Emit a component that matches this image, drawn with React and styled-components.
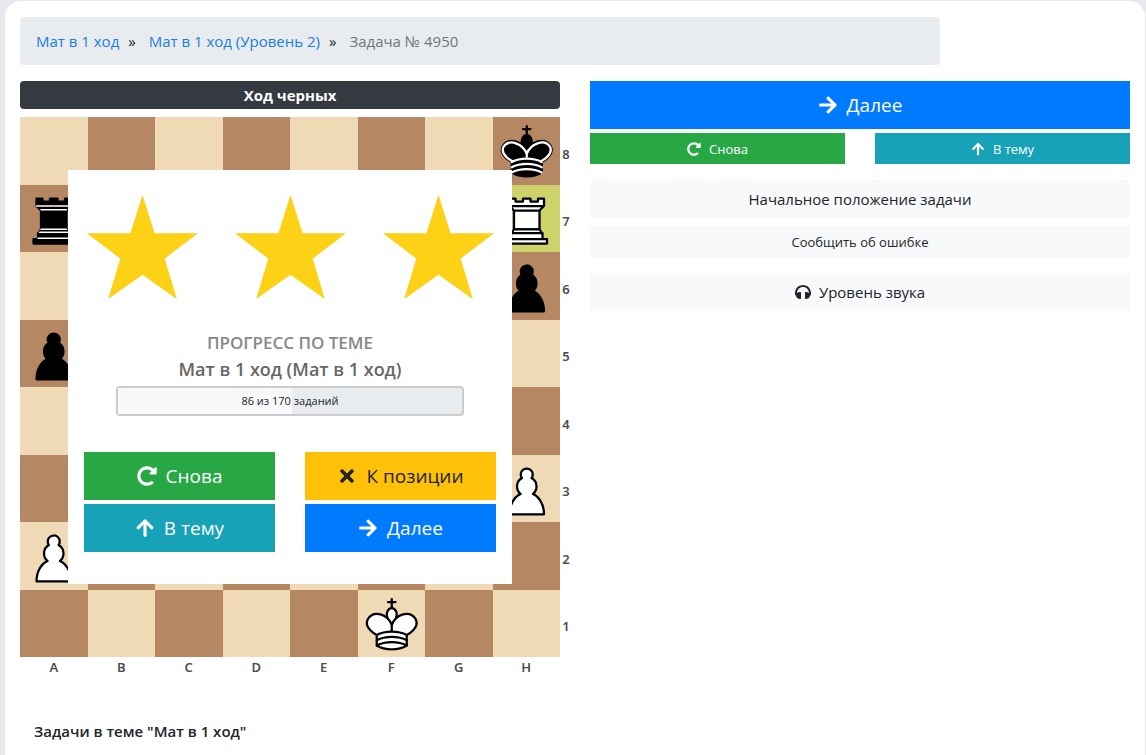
import React from "react";
import styled, { createGlobalStyle } from "styled-components";
import {
  FaArrowRight,
  FaArrowUp,
  FaHeadphones,
  FaRedoAlt,
  FaTimes,
} from "react-icons/fa";

const files = ["A", "B", "C", "D", "E", "F", "G", "H"];
const ranks = [8, 7, 6, 5, 4, 3, 2, 1];

const position = {
  H8: "blackKing",
  A7: "blackRook",
  H7: "whiteRook",
  H6: "blackPawn",
  A5: "blackPawn",
  H3: "whitePawn",
  A2: "whitePawn",
  F1: "whiteKing",
};

const lastMove = "H7";

const progress = { done: 86, total: 170 };

const King = ({ fill, line }) => (
  <g fill={fill}>
    <path strokeLinejoin="miter" d="M22.5 11.63V6M20 8h5" />
    <path d="M22.5 25s4.5-7.5 3-10.5c0 0-1-2.5-3-2.5s-3 2.5-3 2.5c-1.5 3 3 10.5 3 10.5" />
    <path d="M12.5 37c5.5 3.5 14.5 3.5 20 0v-7s9-4.5 6-10.5c-4-6.5-13.5-3.5-16 4V27v-3.5c-2.5-7.5-12-10.5-16-4-3 6 6 10.5 6 10.5v7" />
    {line === "#fff" && (
      <path
        stroke={line}
        d="M32 29.5s8.5-4 6.03-9.65C34.15 14 25 18 22.5 24.5v2.1-2.1C20 18 10.85 14 6.97 19.85 4.5 25.5 13 29.5 13 29.5"
      />
    )}
    <path
      fill="none"
      stroke={line}
      d="M12.5 30c5.5-3 14.5-3 20 0m-20 3.5c5.5-3 14.5-3 20 0m-20 3.5c5.5-3 14.5-3 20 0"
    />
  </g>
);

const Pawn = ({ fill }) => (
  <path
    fill={fill}
    d="M22.5 9c-2.21 0-4 1.79-4 4 0 .89.29 1.71.78 2.38C17.33 16.5 16 18.59 16 21c0 2.03.94 3.84 2.41 5.03-3 1.06-7.41 5.55-7.41 13.47h23c0-7.92-4.41-12.41-7.41-13.47 1.47-1.19 2.41-3 2.41-5.03 0-2.41-1.33-4.5-3.28-5.62.49-.67.78-1.49.78-2.38 0-2.21-1.79-4-4-4z"
  />
);

const Rook = ({ fill, line }) => (
  <g fill={fill}>
    <path d="M14 29.5v-13h17v13H14z" />
    <path d="M9 39h27v-3H9v3zM12.5 32l1.5-2.5h17l1.5 2.5h-20zM12 36v-4h21v4H12z" />
    <path d="M14 17L11 14h23l-3 3H14zM11 14V9h4v2h5V9h5v2h5V9h4v5H11z" />
    {line === "#fff" && (
      <path
        stroke={line}
        strokeWidth="1"
        d="M12 35.5h21M13 31.5h19M14 29.5h17M14 16.5h17M11 14h23"
      />
    )}
  </g>
);

const pieces = {
  blackKing: <King fill="#000" line="#fff" />,
  whiteKing: <King fill="#fff" line="#000" />,
  blackRook: <Rook fill="#000" line="#fff" />,
  whiteRook: <Rook fill="#fff" line="#000" />,
  blackPawn: <Pawn fill="#000" />,
  whitePawn: <Pawn fill="#fff" />,
};

const Board = () => (
  <BoardFrame>
    <Squares>
      {ranks.map((rank, y) =>
        files.map((file, x) => {
          const name = file + rank;
          return (
            <Square
              key={name}
              $dark={(x + y) % 2 === 1}
              $marked={name === lastMove}
            >
              {position[name] && (
                <Piece viewBox="0 0 45 45">{pieces[position[name]]}</Piece>
              )}
            </Square>
          );
        })
      )}
    </Squares>
    <Ranks>
      {ranks.map((rank) => (
        <Coord key={rank}>{rank}</Coord>
      ))}
    </Ranks>
    <Files>
      {files.map((file) => (
        <Coord key={file}>{file}</Coord>
      ))}
    </Files>
  </BoardFrame>
);

const ResultDialog = () => (
  <Dialog role="dialog" aria-label="Прогресс по теме">
    <Stars>
      {[1, 2, 3].map((star) => (
        <Star key={star} viewBox="0 0 110 103">
          <polygon points="55,0 67,38 110,38 77,63 89,103 55,79 21,103 33,63 0,38 43,38" />
        </Star>
      ))}
    </Stars>
    <ProgressTitle>ПРОГРЕСС ПО ТЕМЕ</ProgressTitle>
    <ThemeTitle>Мат в 1 ход (Мат в 1 ход)</ThemeTitle>
    <Progress>
      <ProgressBar
        style={{ width: `${(progress.done / progress.total) * 100}%` }}
      />
      <ProgressText>
        {progress.done} из {progress.total} заданий
      </ProgressText>
    </Progress>
    <DialogButtons>
      <Button $size="large" $color="green">
        <FaRedoAlt />
        Снова
      </Button>
      <Button $size="large" $color="yellow">
        <FaTimes />К позиции
      </Button>
      <Button $size="large" $color="teal">
        <FaArrowUp />В тему
      </Button>
      <Button $size="large" $color="blue">
        <FaArrowRight />
        Далее
      </Button>
    </DialogButtons>
  </Dialog>
);

const App = () => {
  return (
    <>
      <GlobalStyle />
      <Page>
        <Breadcrumb>
          <a href="#mate">Мат в 1 ход</a>
          <Separator>»</Separator>
          <a href="#level">Мат в 1 ход (Уровень 2)</a>
          <Separator>»</Separator>
          <Current>Задача № 4950</Current>
        </Breadcrumb>
        <Column>
          <Turn>Ход черных</Turn>
          <BoardArea>
            <Board />
            <ResultDialog />
          </BoardArea>
        </Column>
        <Column>
          <Button $size="large" $color="blue">
            <FaArrowRight />
            Далее
          </Button>
          <ButtonPair>
            <Button $size="small" $color="green">
              <FaRedoAlt />
              Снова
            </Button>
            <Button $size="small" $color="teal">
              <FaArrowUp />В тему
            </Button>
          </ButtonPair>
          <LightButtons>
            <Button $color="light">Начальное положение задачи</Button>
            <Button $size="small" $color="light">
              Сообщить об ошибке
            </Button>
          </LightButtons>
          <Button $color="light">
            <FaHeadphones />
            Уровень звука
          </Button>
        </Column>
        <TasksTitle>Задачи в теме "Мат в 1 ход"</TasksTitle>
      </Page>
    </>
  );
};

const colors = {
  blue: ["#007bff", "#fff"],
  green: ["#28a745", "#fff"],
  teal: ["#17a2b8", "#fff"],
  yellow: ["#ffc107", "#212529"],
  light: ["#f8f9fa", "#212529"],
};

const sizes = {
  small: { font: 13, height: 31, gap: 8, icon: 14 },
  normal: { font: 15, height: 38, gap: 8, icon: 16 },
  large: { font: 19, height: 48, gap: 9, icon: 20 },
};

const size = (props) => sizes[props.$size || "normal"];

const GlobalStyle = createGlobalStyle`
  * {
    box-sizing: border-box;
  }

  body {
    margin: 0;
    padding: 1px 1px 0 5px;
    background: #e9e8ee;
    color: #212529;
    font-family: "Open Sans", "Noto Sans", sans-serif;
    font-size: 15px;
    line-height: 24px;
  }
`;

const Page = styled.main`
  display: grid;
  grid-template-columns: repeat(12, 1fr);
  column-gap: 30px;
  row-gap: 16px;
  align-content: start;
  min-height: calc(100vh - 1px);
  padding: 16px 15px 0;
  border-radius: 16px 16px 0 0;
  background: #fff;
`;

const Breadcrumb = styled.nav`
  grid-column: span 10;
  display: flex;
  padding: 12px 16px;
  border-radius: 4px;
  background: #e9ecef;

  a {
    color: #1b7ee0;
    text-decoration: none;
  }
`;

const Separator = styled.span`
  padding: 0 13px 0 9px;
`;

const Current = styled.span`
  color: #6c757d;
`;

const Column = styled.section`
  grid-column: span 6;
`;

const Turn = styled.div`
  height: 28px;
  margin-bottom: 8px;
  border-radius: 4px;
  background: #343a40;
  color: #fff;
  font-weight: 700;
  line-height: 28px;
  text-align: center;
`;

const BoardArea = styled.div`
  position: relative;
`;

const BoardFrame = styled.div`
  display: grid;
  grid-template-columns: 100% 12px;
`;

const Squares = styled.div`
  display: grid;
  grid-template-columns: repeat(8, 1fr);
  grid-template-rows: repeat(8, 1fr);
  aspect-ratio: 1;
`;

const Square = styled.div`
  background: ${(props) =>
    props.$marked ? "#cdd26a" : props.$dark ? "#b58863" : "#f0d9b5"};
`;

const Piece = styled.svg`
  display: block;
  width: 100%;
  stroke: #000;
  stroke-width: 1.5;
  stroke-linecap: round;
  stroke-linejoin: round;
`;

const Ranks = styled.div`
  display: grid;
  grid-template-rows: repeat(8, 1fr);
  align-items: center;
  margin: 3px 0 -3px;
`;

const Files = styled.div`
  display: grid;
  grid-template-columns: repeat(8, 1fr);
`;

const Coord = styled.span`
  color: #4d4d4d;
  font-family: "Noto Sans", sans-serif;
  font-size: 13px;
  font-weight: 600;
  line-height: 20px;
  text-align: center;
`;

const Dialog = styled.div`
  position: absolute;
  top: 53px;
  left: 48px;
  right: 48px;
  padding: 25px 0 32px;
  background: #fff;
  text-align: center;
`;

const Stars = styled.div`
  display: grid;
  grid-template-columns: repeat(3, 1fr);
  justify-items: center;
  margin-bottom: 31px;
`;

const Star = styled.svg`
  width: 75%;
  fill: #fcd116;
`;

const ProgressTitle = styled.h2`
  margin: 0;
  color: #888;
  font-size: 17px;
  font-weight: 600;
  line-height: 26px;
`;

const ThemeTitle = styled.h3`
  margin: 0;
  color: #666;
  font-size: 18px;
  font-weight: 600;
  line-height: 26px;
`;

const Progress = styled.div`
  position: relative;
  height: 30px;
  margin: 4px 48px 36px;
  border: 2px solid #ccc;
  border-radius: 4px;
  background: #e9ecef;
`;

const ProgressBar = styled.div`
  height: 100%;
  background: #f8f9fa;
`;

const ProgressText = styled.span`
  position: absolute;
  inset: 0;
  font-size: 11px;
  line-height: 26px;
`;

const DialogButtons = styled.div`
  display: grid;
  grid-template-columns: 1fr 1fr;
  gap: 4px 30px;
  padding: 0 16px;
`;

const Button = styled.button`
  display: flex;
  align-items: center;
  justify-content: center;
  gap: ${(props) => size(props).gap}px;
  width: 100%;
  height: ${(props) => size(props).height}px;
  padding: 0;
  border: 0;
  border-radius: ${(props) => (props.$color === "light" ? 4 : 0)}px;
  background: ${(props) => colors[props.$color][0]};
  color: ${(props) => colors[props.$color][1]};
  font-family: inherit;
  font-size: ${(props) => size(props).font}px;
  cursor: pointer;

  svg {
    width: auto;
    height: ${(props) => size(props).icon}px;
  }
`;

const ButtonPair = styled.div`
  display: grid;
  grid-template-columns: 1fr 1fr;
  gap: 30px;
  margin: 4px 0 16px;
`;

const LightButtons = styled.div`
  display: grid;
  gap: 8px;
  margin-bottom: 16px;
`;

const TasksTitle = styled.h4`
  grid-column: 1 / -1;
  margin: 26px 0 0 14px;
  font-size: 15px;
  font-weight: 600;
  line-height: 24px;
`;

export default App;
